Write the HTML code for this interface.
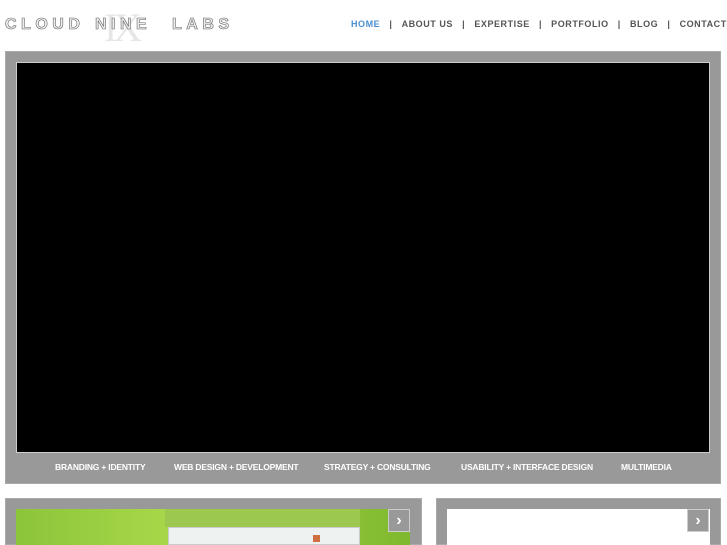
<!DOCTYPE html>
<html><head><style>
html,body{margin:0;width:727px;height:545px;overflow:hidden;background:#fff;font-family:"Liberation Sans",sans-serif;position:relative}
.a{position:absolute}
.lw{top:16px;font-size:16px;letter-spacing:4.5px;font-weight:bold;-webkit-text-stroke:0.6px #666;color:#eee;white-space:nowrap}
.ix{left:104px;top:4px;font-family:"Liberation Serif",serif;font-size:40px;color:#e6e6e6;letter-spacing:-4px}
.nav{top:19px;font-size:9px;font-weight:bold;color:#555;letter-spacing:0.55px;white-space:nowrap}
.box{background:#999;border:1px solid #aaa;box-sizing:border-box}
.sv{top:462px;font-size:8.5px;font-weight:bold;color:#fff;white-space:nowrap;letter-spacing:-0.2px}
.arr{width:22px;height:23px;background:#999;border:1px solid #ccc;color:#fff;font-size:16px;font-weight:bold;text-align:center;line-height:22px;box-sizing:border-box}
</style></head><body>
<div class="a ix">IX</div>
<div class="a lw" style="left:5px">CLOUD</div>
<div class="a lw" style="left:95px">NINE</div>
<div class="a lw" style="left:172px">LABS</div>
<div class="a nav" style="left:351px"><span style="color:#4a90d0">HOME</span>&nbsp;&nbsp;&nbsp;|&nbsp;&nbsp;&nbsp;ABOUT US&nbsp;&nbsp;&nbsp;|&nbsp;&nbsp;&nbsp;EXPERTISE&nbsp;&nbsp;&nbsp;|&nbsp;&nbsp;&nbsp;PORTFOLIO&nbsp;&nbsp;&nbsp;|&nbsp;&nbsp;&nbsp;BLOG&nbsp;&nbsp;&nbsp;|&nbsp;&nbsp;&nbsp;CONTACT</div>
<div class="a box" style="left:5px;top:51px;width:716px;height:433px"></div>
<div class="a" style="left:16px;top:62px;width:694px;height:391px;background:#000;border:1px solid #ccc;box-sizing:border-box"></div>
<div class="a sv" style="left:55px">BRANDING + IDENTITY</div>
<div class="a sv" style="left:174px">WEB DESIGN + DEVELOPMENT</div>
<div class="a sv" style="left:324px">STRATEGY + CONSULTING</div>
<div class="a sv" style="left:461px">USABILITY + INTERFACE DESIGN</div>
<div class="a sv" style="left:621px">MULTIMEDIA</div>
<div class="a box" style="left:5px;top:498px;width:417px;height:47px"></div>
<div class="a" style="left:16px;top:509px;width:394px;height:36px;background:linear-gradient(90deg,#8cc43a,#a8d84a 40%,#7fb82e)"></div>
<div class="a" style="left:165px;top:509px;width:195px;height:18px;background:#9cc850"></div>
<div class="a" style="left:168px;top:527px;width:192px;height:18px;background:#eef2f0;border:1px solid #ccc;box-sizing:border-box"></div>
<div class="a" style="left:313px;top:535px;width:7px;height:7px;background:#d07040"></div>
<div class="a arr" style="left:388px;top:509px">›</div>
<div class="a box" style="left:436px;top:498px;width:285px;height:47px"></div>
<div class="a" style="left:447px;top:509px;width:263px;height:36px;background:#fff"></div>
<div class="a arr" style="left:687px;top:509px">›</div>
</body></html>
